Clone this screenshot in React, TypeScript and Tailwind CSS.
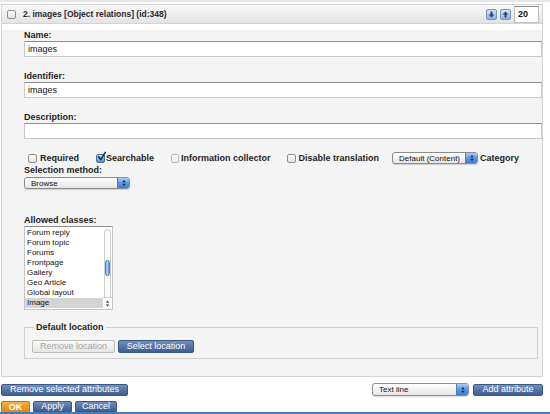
import React from 'react'

// Mac style checkbox, checked state draws a tick that pokes out of the box
function Checkbox({ checked = false, faded = false }: { checked?: boolean; faded?: boolean }) {
  return (
    <span
      className={
        checked
          ? 'relative block w-[9px] h-[9px] shrink-0 rounded-[2px] border border-[#4f6f9f] bg-gradient-to-b from-[#b5d3f5] to-[#4f8fd9]'
          : faded
          ? 'relative block w-[8px] h-[9px] shrink-0 rounded-[2px] border border-[#b8b8b8] bg-gradient-to-b from-white to-[#eeeeee]'
          : 'relative block w-[9px] h-[9px] shrink-0 rounded-[2px] border border-[#8f8f8f] bg-gradient-to-b from-white to-[#e2e2e2]'
      }
    >
      {checked && (
        <svg viewBox="0 0 12 12" className="absolute -top-[4px] left-[0px] w-[10px] h-[11px]">
          <path d="M2 6.5 L4.6 9.5 L10 1" fill="none" stroke="#1d2d45" strokeWidth="1.8" strokeLinecap="round" />
        </svg>
      )}
    </span>
  )
}

function Stepper() {
  return (
    <span className="flex w-[12px] shrink-0 items-center justify-center border-l border-[#5a7db0] bg-gradient-to-b from-[#a9cdf6] via-[#5c99e4] to-[#3a7bd6]">
      <svg viewBox="0 0 6 10" className="w-[4px] h-[8px]">
        <path d="M3 0.5 L5.6 4 L0.4 4 Z" fill="#1b2433" />
        <path d="M3 9.5 L5.6 6 L0.4 6 Z" fill="#1b2433" />
      </svg>
    </span>
  )
}

function Select({ text, className }: { text: string; className: string }) {
  return (
    <div
      className={
        'flex shrink-0 overflow-hidden rounded-[3px] border border-[#8c8c8c] bg-gradient-to-b from-white to-[#e6e6e6] shadow-[0_1px_1px_rgba(0,0,0,0.15)] ' +
        className
      }
    >
      <span className="flex-1 truncate pl-[6px] text-[8px] font-normal leading-[11px] text-[#111]">{text}</span>
      <Stepper />
    </div>
  )
}

function BlueButton({ label, className }: { label: string; className: string }) {
  return (
    <button
      className={
        'flex shrink-0 items-center justify-center rounded-[2px] border border-[#3a5786] bg-gradient-to-b from-[#6f8dbd] to-[#3f5d8e] text-[9px] leading-[11px] text-white ' +
        className
      }
    >
      {label}
    </button>
  )
}

function ArrowIcon({ up = false }: { up?: boolean }) {
  return (
    <span className="flex w-[11px] h-[11px] items-center justify-center rounded-[2px] border border-[#7394c4] bg-gradient-to-b from-[#d5e4f5] to-[#8fb1dc]">
      <svg viewBox="0 0 8 8" className="w-[7px] h-[7px]">
        {up ? (
          <path d="M4 0.5 L7.5 4 L5.2 4 L5.2 7.5 L2.8 7.5 L2.8 4 L0.5 4 Z" fill="#26487d" />
        ) : (
          <path d="M4 7.5 L7.5 4 L5.2 4 L5.2 0.5 L2.8 0.5 L2.8 4 L0.5 4 Z" fill="#26487d" />
        )}
      </svg>
    </span>
  )
}

function Field({ label, value, first = false }: { label: string; value: string; first?: boolean }) {
  return (
    <div className={first ? 'mt-[6px]' : 'mt-[14px]'}>
      <div className="h-[11px] text-[9px] font-bold leading-[11px] text-[#1e1e1e]">{label}</div>
      <div className="h-[16px] w-full border border-[#c9c9c9] border-t-[#8e8e8e] bg-white pl-[3px] text-[9px] leading-[14px] text-[#111]">
        {value}
      </div>
    </div>
  )
}

const classes = ['Forum reply', 'Forum topic', 'Forums', 'Frontpage', 'Gallery', 'Geo Article', 'Global layout', 'Image']

export default function App() {
  return (
    <div className="relative h-[414px] w-[550px] overflow-hidden bg-white font-['Liberation_Sans',Arial,sans-serif] text-[#1e1e1e]">
      {/* strip of the item above */}
      <div className="h-[4px] border-t-[2px] border-[#e6e6e6]" />

      <div className="ml-[1px] w-[542px] border border-[#d3d3d3]">
        {/* header */}
        <div className="flex h-[19px] items-center border-b border-[#d3d3d3] bg-gradient-to-b from-[#f9f9f9] to-[#e3e3e3] pl-[5px] pr-[3px]">
          <Checkbox />
          <span className="ml-[7px] text-[8.5px] font-bold leading-[11px] text-[#2a2a2a]">
            2. images [Object relations] (id:348)
          </span>
          <div className="ml-auto flex items-center">
            <ArrowIcon />
            <span className="ml-[3px]">
              <ArrowIcon up />
            </span>
            <div className="ml-[3px] h-[17px] w-[25px] border border-[#bdbdbd] border-t-[#8e8e8e] bg-white pl-[3px] text-[9px] font-bold leading-[15px] text-[#111]">
              20
            </div>
          </div>
        </div>

        {/* body */}
        <div className="bg-[#f4f4f4] pl-[22px] pb-[17px]">
          <Field label="Name:" value="images" first />
          <Field label="Identifier:" value="images" />
          <Field label="Description:" value="" />

          <div className="mt-[12px] flex h-[14px] items-center pl-[4px] text-[9px] font-bold leading-[11px]">
            <Checkbox />
            <span className="ml-[3px]">Required</span>
            <span className="ml-[17px]">
              <Checkbox checked />
            </span>
            <span className="ml-[1px]">Searchable</span>
            <span className="ml-[17px]">
              <Checkbox faded />
            </span>
            <span className="ml-[2px]">Information collector</span>
            <span className="ml-[16px]">
              <Checkbox />
            </span>
            <span className="ml-[3px]">Disable translation</span>
            <Select text="Default (Content)" className="ml-[13px] h-[12px] w-[86px]" />
            <span className="ml-[2px]">Category</span>
          </div>

          <div className="h-[11px] text-[9px] font-bold leading-[11px]">Selection method:</div>
          <Select text="Browse" className="mt-[1px] h-[12px] w-[106px]" />

          <div className="mt-[26px] h-[11px] text-[9px] font-bold leading-[11px]">Allowed classes:</div>
          <div className="flex h-[84px] w-[89px] border border-[#c4c4c4] border-t-[#8e8e8e] bg-white">
            <div className="flex-1 pt-[1px]">
              {classes.map(c => (
                <div
                  key={c}
                  className={
                    c === 'Image'
                      ? 'h-[10px] bg-[#d4d4d4] pl-[2px] text-[8px] leading-[10px] text-[#111]'
                      : 'h-[10px] pl-[2px] text-[8px] leading-[10px] text-[#111]'
                  }
                >
                  {c}
                </div>
              ))}
            </div>
            <div className="flex w-[9px] flex-col">
              <div className="mx-[1px] mt-[2px] flex-1 rounded-t-[4px] border border-b-0 border-[#cfcfcf] bg-[#fafafa]">
                <div className="mt-[30px] h-[16px] rounded-[3px] border border-[#5479b3] bg-gradient-to-r from-[#7fb0ec] via-[#a9cbf4] to-[#4d8bdc]" />
              </div>
              <div className="flex h-[12px] flex-col items-center justify-center gap-[1px] border-t border-[#cfcfcf]">
                <svg viewBox="0 0 4 3" className="w-[3px] h-[3px]">
                  <path d="M2 0 L4 3 L0 3 Z" fill="#333" />
                </svg>
                <svg viewBox="0 0 4 3" className="w-[3px] h-[3px]">
                  <path d="M2 3 L4 0 L0 0 Z" fill="#333" />
                </svg>
              </div>
            </div>
          </div>

          <fieldset className="mt-[12px] mr-[4px] border border-[#d0d0d0] pb-[5px] pl-[7px]">
            <legend className="ml-[2px] px-[2px] text-[9px] font-bold leading-[11px]">Default location</legend>
            <div className="mt-[7px] flex gap-[3px]">
              <button className="flex h-[13px] w-[83px] items-center justify-center rounded-[2px] border border-[#bdbdbd] bg-gradient-to-b from-[#fafafa] to-[#e6e6e6] text-[9px] leading-[11px] text-[#a3a3a3]">
                Remove location
              </button>
              <BlueButton label="Select location" className="h-[13px] w-[76px]" />
            </div>
          </fieldset>
        </div>
      </div>

      {/* actions under the panel */}
      <div className="mt-[6px] flex h-[13px] w-[543px] items-center pl-[1px]">
        <BlueButton label="Remove selected attributes" className="h-[12px] w-[127px]" />
        <Select text="Text line" className="ml-auto h-[13px] w-[97px]" />
        <BlueButton label="Add attribute" className="ml-[4px] h-[12px] w-[70px]" />
      </div>

      <div className="mt-[5px] flex h-[11px] gap-[3px] pl-[1px]">
        <button className="flex h-[11px] w-[29px] items-center justify-center rounded-t-[2px] border border-b-0 border-[#c8760a] bg-gradient-to-b from-[#f7b03a] to-[#e38606] text-[9px] font-bold leading-[11px] text-white">
          OK
        </button>
        <BlueButton label="Apply" className="h-[11px] w-[39px] rounded-b-none" />
        <BlueButton label="Cancel" className="h-[11px] w-[42px] rounded-b-none" />
      </div>
      <div className="h-[2px] bg-[#3d7ebf]" />
    </div>
  )
}
